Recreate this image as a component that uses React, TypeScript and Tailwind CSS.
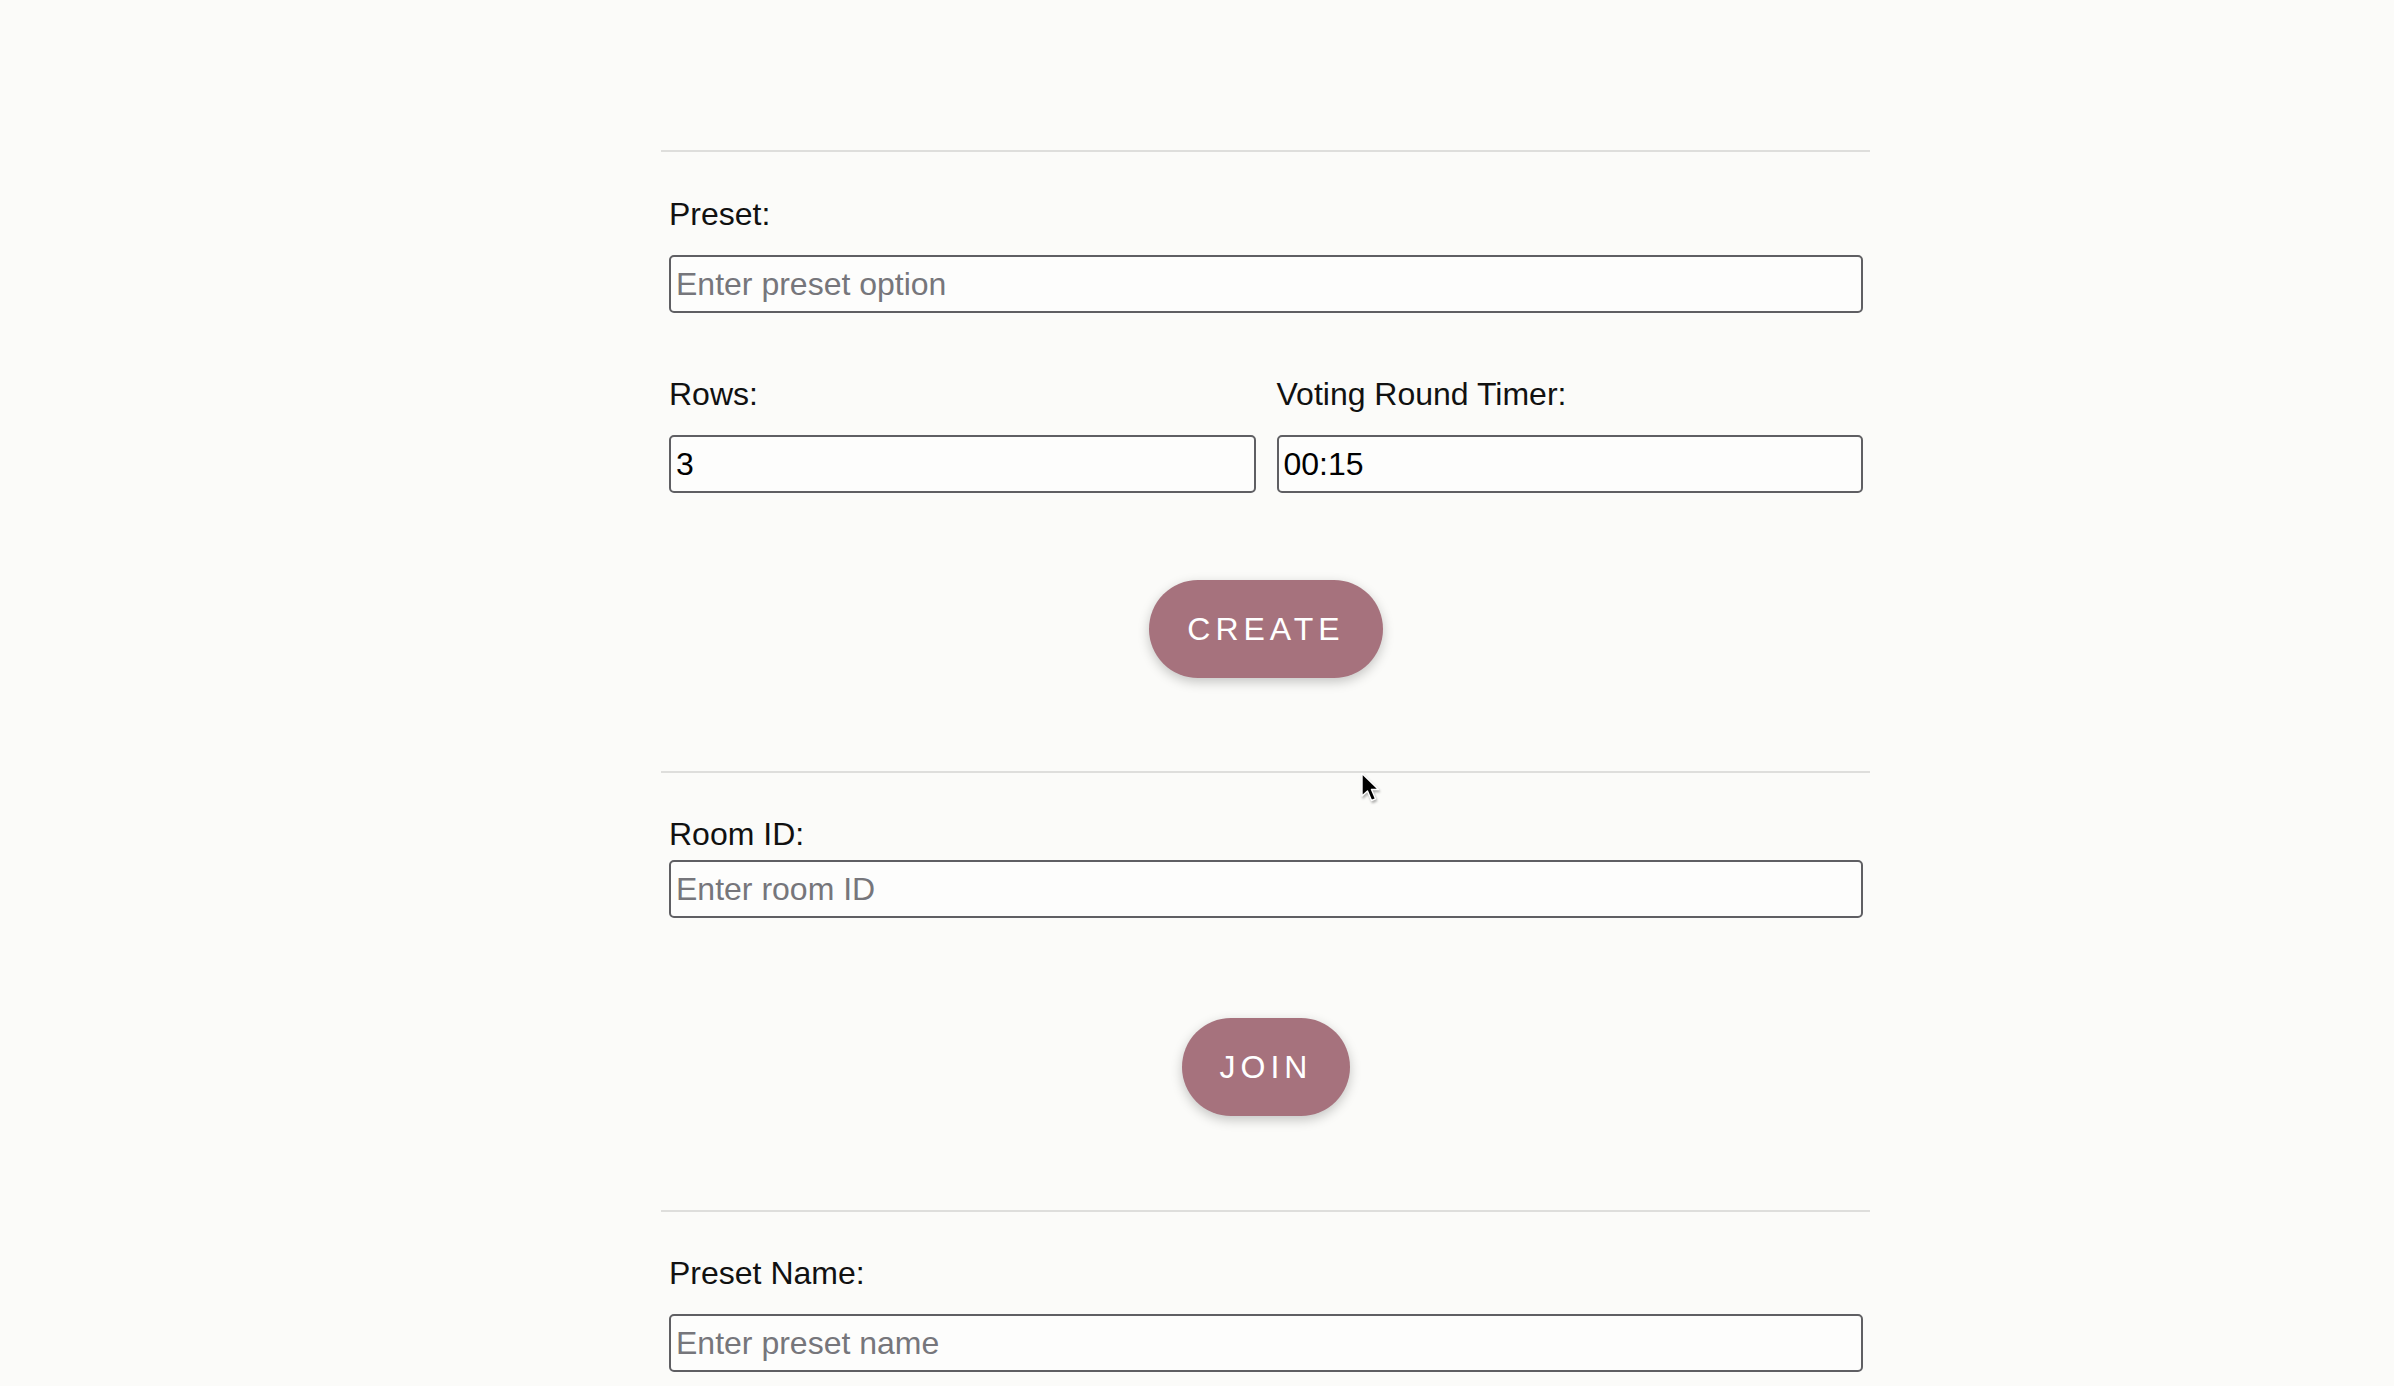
const Label = ({ children }: { children: React.ReactNode }) => (
  <label className="block text-[32px] leading-[37px] text-[#111111]">{children}</label>
);

const Field = ({ placeholder, value }: { placeholder?: string; value?: string }) => (
  <input
    type="text"
    placeholder={placeholder}
    defaultValue={value}
    className="block w-full h-[58px] border-2 border-[#5f5f63] rounded-[5px] bg-[#fdfdfc] pl-[5px] text-[32px] text-black placeholder:text-[#76767b] outline-none"
  />
);

const PillButton = ({ children }: { children: React.ReactNode }) => (
  <button className="h-[98px] px-[38px] rounded-full bg-[#a6727d] text-white text-[32px] tracking-[5px] shadow-[0_4px_12px_rgba(0,0,0,0.22)]">
    {children}
  </button>
);

const Divider = () => <div className="h-[2px] bg-[#dededc]" />;

export default function App() {
  return (
    <div
      className="relative min-h-screen bg-[#fbfbf9] pl-[661px] pt-[150px] overflow-hidden"
      style={{ fontFamily: '"Liberation Sans", Arial, sans-serif' }}
    >
      <div className="w-[1209px]">
        <Divider />
        <div className="pl-[8px] pr-[7px]">
          <div className="mt-[44px]">
            <Label>Preset:</Label>
            <div className="mt-[22px]">
              <Field placeholder="Enter preset option" />
            </div>
          </div>
          <div className="mt-[63px] grid grid-cols-2 gap-x-[21px]">
            <div>
              <Label>Rows:</Label>
              <div className="mt-[22px]">
                <Field value="3" />
              </div>
            </div>
            <div>
              <Label>Voting Round Timer:</Label>
              <div className="mt-[22px]">
                <Field value="00:15" />
              </div>
            </div>
          </div>
          <div className="mt-[87px] flex justify-center">
            <PillButton>CREATE</PillButton>
          </div>
        </div>

        <div className="mt-[93px]">
          <Divider />
        </div>
        <div className="pl-[8px] pr-[7px]">
          <div className="mt-[43px]">
            <Label>Room ID:</Label>
            <div className="mt-[7px]">
              <Field placeholder="Enter room ID" />
            </div>
          </div>
          <div className="mt-[100px] flex justify-center">
            <PillButton>JOIN</PillButton>
          </div>
        </div>

        <div className="mt-[94px]">
          <Divider />
        </div>
        <div className="pl-[8px] pr-[7px]">
          <div className="mt-[43px]">
            <Label>Preset Name:</Label>
            <div className="mt-[22px]">
              <Field placeholder="Enter preset name" />
            </div>
          </div>
        </div>
      </div>

      {/* mouse pointer captured in the screenshot */}
      <svg
        className="absolute left-[1360px] top-[772px] drop-shadow-[1px_2px_1px_rgba(0,0,0,0.3)]"
        width="20"
        height="32"
        viewBox="0 0 20 32"
      >
        <path
          d="M2 1.5 L2 24 L7.5 19 L11.5 28.5 L15.5 26.8 L11.5 17.5 L18.5 17.5 Z"
          fill="#000"
          stroke="#fff"
          strokeWidth="1.4"
          strokeLinejoin="round"
        />
      </svg>
    </div>
  );
}
